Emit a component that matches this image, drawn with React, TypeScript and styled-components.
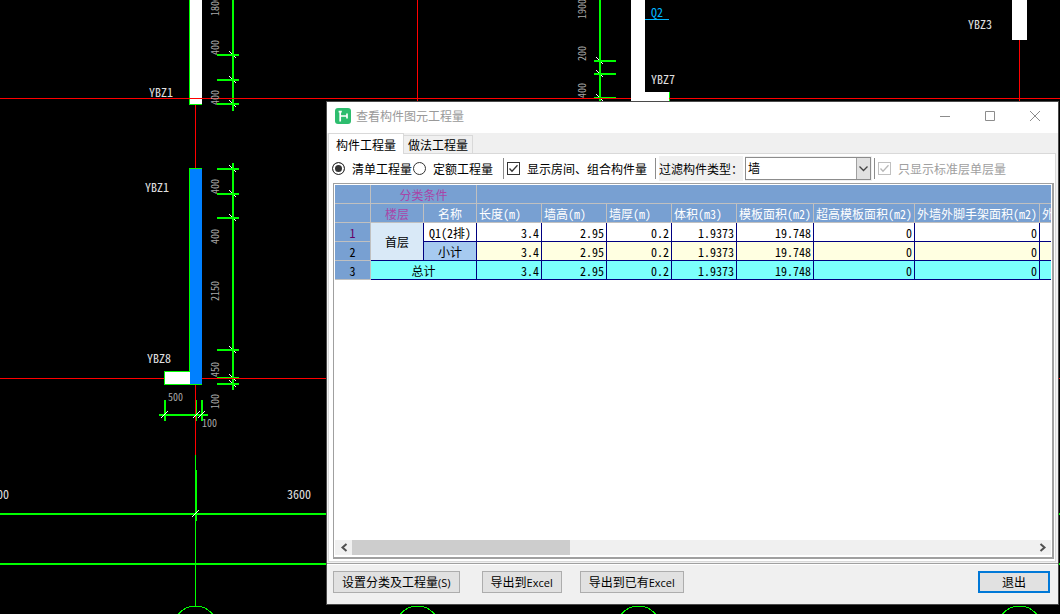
import React from "react";
import styled, { createGlobalStyle, css } from "styled-components";

const GlobalStyle = createGlobalStyle`
  *, *::before, *::after { box-sizing: border-box; }
  html, body { margin: 0; background: #000; }
  body, button, select, input {
    font-family: "Noto Sans CJK SC", sans-serif;
    font-size: 12px;
    line-height: 16px;
    color: #000;
  }
`;

const Desktop = styled.main`
  position: relative;
  min-height: 100vh;
  background: #000;
  overflow: hidden;
`;

/* ---------- CAD drawing ---------- */

const Drawing = styled.svg`
  position: absolute;
  inset: 0;
  width: 100%;
  height: 100%;
  shape-rendering: crispEdges;
`;

const TagText = styled.text<{ $color?: string }>`
  fill: ${(p) => p.$color ?? "#e0e0e0"};
  font-size: 12px;
  font-feature-settings: "hwid";
`;

const DimText = styled.text`
  fill: #a8a8a8;
  font-size: 10px;
  font-feature-settings: "hwid";
`;

const GREEN = "#00ff00";
const RED = "#ff0000";

const Bar = (p: { x: number; y: number; w: number; h: number; fill?: string }) => (
  <rect x={p.x} y={p.y} width={p.w} height={p.h} fill={p.fill ?? GREEN} />
);

const Slash = ({ x, y, up }: { x: number; y: number; up?: boolean }) => (
  <line
    x1={x - 3}
    y1={up ? y + 3 : y - 3}
    x2={x + 4}
    y2={up ? y - 4 : y + 4}
    stroke="#fff"
    strokeWidth={1}
  />
);

const VerticalDim = (p: { x: number; from: number; to: number; ticks: number[]; left: number }) => (
  <g>
    {p.ticks.map((t) => (
      <g key={t}>
        <Bar x={p.x - p.left} y={t} w={22} h={2} />
        <Slash x={p.x} y={t} />
      </g>
    ))}
    <Bar x={p.x} y={p.from} w={2} h={p.to - p.from} />
  </g>
);

const upright = [
  { t: "1800", x: 219, y: 16 },
  { t: "400", x: 219, y: 55 },
  { t: "400", x: 219, y: 105 },
  { t: "400", x: 219, y: 194 },
  { t: "400", x: 219, y: 244 },
  { t: "2150", x: 219, y: 301 },
  { t: "450", x: 219, y: 377 },
  { t: "100", x: 219, y: 409 },
  { t: "1900", x: 586, y: 19 },
  { t: "200", x: 586, y: 61 },
  { t: "400", x: 586, y: 98 },
];

const tags = [
  { t: "YBZ1", x: 149, y: 97 },
  { t: "YBZ1", x: 145, y: 192 },
  { t: "YBZ8", x: 147, y: 363 },
  { t: "YBZ7", x: 651, y: 84 },
  { t: "YBZ3", x: 968, y: 29 },
  { t: "3600", x: 287, y: 499 },
  { t: "3600", x: -15, y: 499 },
];

const Plan = () => (
  <Drawing aria-label="plan">
    {/* axis lines */}
    <Bar x={195} y={104} w={1} h={351} fill={RED} />
    <Bar x={417} y={0} w={1} h={110} fill={RED} />
    <Bar x={1019} y={0} w={1} h={110} fill={RED} />

    {/* walls and columns */}
    <Bar x={189} y={0} w={13} h={105} />
    <Bar x={190} y={0} w={12} h={104} fill="#fff" />
    <Bar x={631} y={0} w={14} h={110} fill="#fff" />
    <Bar x={631} y={92} w={38} h={18} fill="#fff" />
    <Bar x={669} y={92} w={1} h={18} />
    <Bar x={1012} y={0} w={15} h={40} fill="#fff" />

    {/* dimension chains */}
    <VerticalDim x={232} from={0} to={111} ticks={[54, 79, 103]} left={15} />
    <VerticalDim x={232} from={163} to={390} ticks={[168, 193, 217, 349, 377, 383]} left={15} />
    <VerticalDim x={599} from={0} to={110} ticks={[60, 73, 97]} left={5} />
    <Bar x={159} y={414} w={49} h={2} />
    <Bar x={164} y={400} w={2} h={21} />
    <Bar x={196} y={400} w={1} h={21} />
    <Bar x={201} y={400} w={2} h={21} />
    <Slash x={164} y={415} up />
    <Slash x={196} y={415} up />
    <Slash x={201} y={415} up />

    <Bar x={0} y={98} w={4000} h={1} fill={RED} />
    <Bar x={0} y={378} w={4000} h={1} fill={RED} />
    <Bar x={631} y={98} w={38} h={1} fill="#fff" />

    <Bar x={164} y={371} w={38} h={14} />
    <Bar x={165} y={372} w={25} h={12} fill="#fff" />
    <Bar x={189} y={168} w={13} h={204} />
    <Bar x={190} y={169} w={12} h={215} fill="#0080ff" />

    {/* lower axis dimension and bubbles */}
    <Bar x={0} y={513} w={4000} h={2} />
    <Bar x={0} y={563} w={4000} h={2} />
    <Bar x={195} y={455} w={1} h={151} />
    <Bar x={195} y={470} w={2} h={51} />
    <Slash x={195} y={514} up />
    {[195, 417, 638, 1019].map((cx) => (
      <circle key={cx} cx={cx + 0.5} cy={628} r={22} fill="none" stroke={GREEN} />
    ))}

    {upright.map((d) => (
      <DimText key={`${d.x}-${d.y}`} x={d.x} y={d.y} transform={`rotate(-90 ${d.x} ${d.y})`}>
        {d.t}
      </DimText>
    ))}
    <DimText x={168} y={401}>500</DimText>
    <DimText x={202} y={427}>100</DimText>
    {tags.map((d) => (
      <TagText key={`${d.x}-${d.y}`} x={d.x} y={d.y}>
        {d.t}
      </TagText>
    ))}
    <TagText x={651} y={17} $color="#00b4ff">Q2</TagText>
    <Bar x={645} y={19} w={24} h={1} fill="#00b4ff" />
  </Drawing>
);

/* ---------- dialog ---------- */

const Dialog = styled.section`
  position: absolute;
  top: 101px;
  right: 1px;
  bottom: 9px;
  left: 326px;
  display: flex;
  flex-direction: column;
  border: 1px solid #4a4a4a;
  background: #f0f0f0;
`;

const TitleBar = styled.header`
  display: flex;
  align-items: center;
  height: 31px;
  padding: 0 0 3px 8px;
  background: #fff;
`;

const Title = styled.h1`
  flex: 1;
  margin: 0 0 0 5px;
  font-size: 12px;
  font-weight: 400;
  line-height: 16px;
  color: #999;
`;

const WindowButton = styled.button`
  display: grid;
  place-items: center;
  width: 45px;
  height: 28px;
  padding: 0;
  border: 0;
  background: none;
`;

const TabList = styled.div`
  display: flex;
  align-items: flex-end;
  height: 20px;
  padding-left: 1px;
`;

const Tab = styled.button<{ $active?: boolean }>`
  height: 18px;
  padding: 0 4px;
  border: 1px solid #d9d9d9;
  border-bottom: 0;
  border-left: 0;
  background: #f0f0f0;
  line-height: 17px;
  ${(p) =>
    p.$active &&
    css`
      z-index: 1;
      height: 21px;
      margin-bottom: -1px;
      padding: 0 7px;
      border-left: 1px solid #d9d9d9;
      background: #fff;
    `}
`;

const Panel = styled.div`
  flex: 1;
  display: flex;
  flex-direction: column;
  min-height: 0;
  margin: 0 2px 1px 1px;
  padding: 0 1px 2px 4px;
  border: 1px solid #d9d9d9;
  background: #fff;
`;

const Toolbar = styled.div`
  display: flex;
  align-items: center;
  height: 29px;
  margin-left: -1px;
  white-space: nowrap;
`;

const Choice = styled.label<{ $muted?: boolean }>`
  display: flex;
  align-items: center;
  gap: 7px;
  color: ${(p) => (p.$muted ? "#a0a0a0" : "#000")};
  & + & { margin-left: 1px; }
`;

const Radio = styled.input`
  appearance: none;
  width: 13px;
  height: 13px;
  margin: 0;
  border: 1px solid #333;
  border-radius: 50%;
  background: #fff;
  &:checked {
    background: #333;
    box-shadow: inset 0 0 0 2px #fff;
  }
`;

const CheckWrap = styled.span`
  position: relative;
  display: block;
  width: 13px;
  height: 13px;
  svg {
    position: absolute;
    inset: 0;
    pointer-events: none;
  }
`;

const CheckInput = styled.input`
  appearance: none;
  display: block;
  width: 13px;
  height: 13px;
  margin: 0;
  border: 1px solid #333;
  background: #fff;
  &:disabled { border-color: #c0c0c0; }
`;

const Divider = styled.span<{ $before: number }>`
  width: 1px;
  height: 21px;
  margin: 0 3px 0 ${(p) => p.$before}px;
  background: #8c8c8c;
`;

const FilterLabel = styled.label`
  height: 25px;
  margin-right: 2px;
  background: #f0f0f0;
  line-height: 25px;
`;

const SelectWrap = styled.span`
  position: relative;
  width: 127px;
  height: 25px;
  border: 1px solid #f0f0f0;
  border-left: 0;
  svg {
    position: absolute;
    top: 1px;
    right: 1px;
    background: #e1e1e1;
    border-left: 1px solid #a0a0a0;
    pointer-events: none;
  }
`;

const Select = styled.select`
  appearance: none;
  display: block;
  width: 100%;
  height: 23px;
  padding: 0 16px 2px 2px;
  border: 1px solid #8c8c8c;
  border-radius: 0;
  background: #fff;
`;

const Sheet = styled.div`
  flex: 1;
  display: flex;
  flex-direction: column;
  min-height: 0;
  padding: 1px 1px 2px;
  border: 1px solid #a0a0a0;
  border-width: 1px 2px 2px 1px;
  overflow: hidden;
`;

const Grid = styled.table`
  width: 100%;
  table-layout: fixed;
  border-collapse: separate;
  border-spacing: 0;
  font-feature-settings: "hwid";
  line-height: 18px;
  white-space: nowrap;
`;

const HeadCell = styled.th<{ $align?: string; $color?: string }>`
  height: 19px;
  padding: 0 2px;
  border: solid #c0c0c0;
  border-width: 0 1px 1px 0;
  background: #78a0d2;
  color: ${(p) => p.$color ?? "#fff"};
  font-weight: 400;
  line-height: 17px;
  text-align: ${(p) => p.$align ?? "center"};
  overflow: hidden;
  thead &:last-child { border-right: 0; }
`;

const Cell = styled.td<{ $bg: string; $align?: string }>`
  height: 19px;
  padding: 0 2px;
  border: solid #000080;
  border-width: 0 1px 1px 0;
  background: ${(p) => p.$bg};
  line-height: 17px;
  text-align: ${(p) => p.$align ?? "right"};
  &:last-child { border-right: 0; }
`;

const Blank = styled.div`
  flex: 1;
`;

const ScrollBar = styled.div`
  display: flex;
  height: 15px;
  background: #f0f0f0;
`;

const ScrollButton = styled.button`
  display: grid;
  place-items: center;
  width: 17px;
  height: 15px;
  padding: 0;
  border: 0;
  background: none;
`;

const Track = styled.div`
  flex: 1;
`;

const Thumb = styled.div`
  width: 32%;
  height: 15px;
  background: #cdcdcd;
`;

const Footer = styled.footer`
  display: flex;
  align-items: flex-start;
  height: 41px;
  padding: 7px 8px 0 6px;
  border-top: 1px solid #a0a0a0;
  box-shadow: inset 0 1px #fff;
`;

const PushButton = styled.button<{ $primary?: boolean; $after?: number }>`
  height: 22px;
  padding: 0 8px;
  margin-right: ${(p) => p.$after ?? 0}px;
  border: 1px solid #adadad;
  background: #e1e1e1;
  line-height: 20px;
  white-space: nowrap;
  ${(p) =>
    p.$primary &&
    css`
      margin-left: auto;
      padding: 0 22px;
      border: 2px solid #0078d7;
      line-height: 18px;
    `}
`;

const Latin = styled.span`
  font-family: "Open Sans", sans-serif;
  font-size: 11px;
`;

const CheckBox = ({ disabled }: { disabled?: boolean }) => (
  <CheckWrap>
    <CheckInput type="checkbox" defaultChecked disabled={disabled} />
    <svg width="13" height="13" fill="none" stroke={disabled ? "#b8b8b8" : "#333"} strokeWidth="1.3">
      <path d="M2.5 6.5 5 9.2 10.5 3.3" />
    </svg>
  </CheckWrap>
);

const columns = [
  { name: "长度(m)", width: 65, value: "3.4" },
  { name: "墙高(m)", width: 65, value: "2.95" },
  { name: "墙厚(m)", width: 65, value: "0.2" },
  { name: "体积(m3)", width: 65, value: "1.9373" },
  { name: "模板面积(m2)", width: 77, value: "19.748" },
  { name: "超高模板面积(m2)", width: 101, value: "0" },
  { name: "外墙外脚手架面积(m2)", width: 125, value: "0" },
];

const Values = ({ bg }: { bg: string }) => (
  <>
    {columns.map((c) => (
      <Cell key={c.name} $bg={bg}>
        {c.value}
      </Cell>
    ))}
    <Cell $bg={bg} />
  </>
);

const PURPLE = "#a846a8";

const QuantityGrid = () => (
  <Grid>
    <colgroup>
      <col width={36} />
      <col width={53} />
      <col width={53} />
      {columns.map((c) => (
        <col key={c.name} width={c.width} />
      ))}
      <col />
    </colgroup>
    <thead>
      <tr>
        <HeadCell />
        <HeadCell colSpan={2} $color={PURPLE}>分类条件</HeadCell>
        <HeadCell colSpan={8} />
      </tr>
      <tr>
        <HeadCell />
        <HeadCell $color={PURPLE}>楼层</HeadCell>
        <HeadCell>名称</HeadCell>
        {columns.map((c) => (
          <HeadCell key={c.name} $align="left">{c.name}</HeadCell>
        ))}
        <HeadCell $align="left">外</HeadCell>
      </tr>
    </thead>
    <tbody>
      <tr>
        <HeadCell $color="#660066">1</HeadCell>
        <Cell rowSpan={2} $bg="#d9e9f7" $align="center">首层</Cell>
        <Cell $bg="#fff" $align="center">Q1(2排)</Cell>
        <Values bg="#fff" />
      </tr>
      <tr>
        <HeadCell $color="#000">2</HeadCell>
        <Cell $bg="#a6caf0" $align="center">小计</Cell>
        <Values bg="#ffffe1" />
      </tr>
      <tr>
        <HeadCell $color="#000">3</HeadCell>
        <Cell colSpan={2} $bg="#7bfffc" $align="center">总计</Cell>
        <Values bg="#7bfffc" />
      </tr>
    </tbody>
  </Grid>
);

export default function App() {
  return (
    <>
      <GlobalStyle />
      <Desktop>
        <Plan />
        <Dialog role="dialog" aria-labelledby="dialog-title">
          <TitleBar>
            <svg width="16" height="16">
              <rect width="16" height="16" rx="3" fill="#2dbd6e" />
              <path d="M5.2 3v10.5M5.2 8h7M12 5.5v5M3.6 3.6h3.2" stroke="#fff" strokeWidth="1.7" fill="none" />
            </svg>
            <Title id="dialog-title">查看构件图元工程量</Title>
            <WindowButton aria-label="最小化">
              <svg width="11" height="10" stroke="#8c8c8c" fill="none"><path d="M0 5.5h10" /></svg>
            </WindowButton>
            <WindowButton aria-label="最大化">
              <svg width="11" height="10" stroke="#8c8c8c" fill="none"><path d="M.5.5h9v9h-9z" /></svg>
            </WindowButton>
            <WindowButton aria-label="关闭">
              <svg width="11" height="10" stroke="#8c8c8c" fill="none"><path d="M0 0l10 10M10 0 0 10" /></svg>
            </WindowButton>
          </TitleBar>

          <TabList role="tablist">
            <Tab role="tab" aria-selected $active>构件工程量</Tab>
            <Tab role="tab" aria-selected={false}>做法工程量</Tab>
          </TabList>

          <Panel role="tabpanel">
            <Toolbar>
              <Choice>
                <Radio type="radio" name="kind" defaultChecked />
                清单工程量
              </Choice>
              <Choice>
                <Radio type="radio" name="kind" />
                定额工程量
              </Choice>
              <Divider $before={10} />
              <Choice>
                <CheckBox />
                显示房间、组合构件量
              </Choice>
              <Divider $before={8} />
              <FilterLabel htmlFor="filter">过滤构件类型：</FilterLabel>
              <SelectWrap>
                <Select id="filter" defaultValue="墙">
                  <option>墙</option>
                </Select>
                <svg width="14" height="21" fill="none" stroke="#444" strokeWidth="1.3">
                  <path d="M2.5 8.5l4 4 4-4" />
                </svg>
              </SelectWrap>
              <Divider $before={2} />
              <Choice $muted>
                <CheckBox disabled />
                只显示标准层单层量
              </Choice>
            </Toolbar>

            <Sheet>
              <QuantityGrid />
              <Blank />
              <ScrollBar>
                <ScrollButton aria-label="向左滚动">
                  <svg width="8" height="9" fill="none" stroke="#505050" strokeWidth="2"><path d="M6.5 1 2.5 4.5 6.5 8" /></svg>
                </ScrollButton>
                <Track>
                  <Thumb />
                </Track>
                <ScrollButton aria-label="向右滚动">
                  <svg width="8" height="9" fill="none" stroke="#505050" strokeWidth="2"><path d="M1.5 1 5.5 4.5 1.5 8" /></svg>
                </ScrollButton>
              </ScrollBar>
            </Sheet>
          </Panel>

          <Footer>
            <PushButton $after={22}>设置分类及工程量<Latin>(S)</Latin></PushButton>
            <PushButton $after={18}>导出到<Latin>Excel</Latin></PushButton>
            <PushButton>导出到已有<Latin>Excel</Latin></PushButton>
            <PushButton $primary>退出</PushButton>
          </Footer>
        </Dialog>
      </Desktop>
    </>
  );
}
